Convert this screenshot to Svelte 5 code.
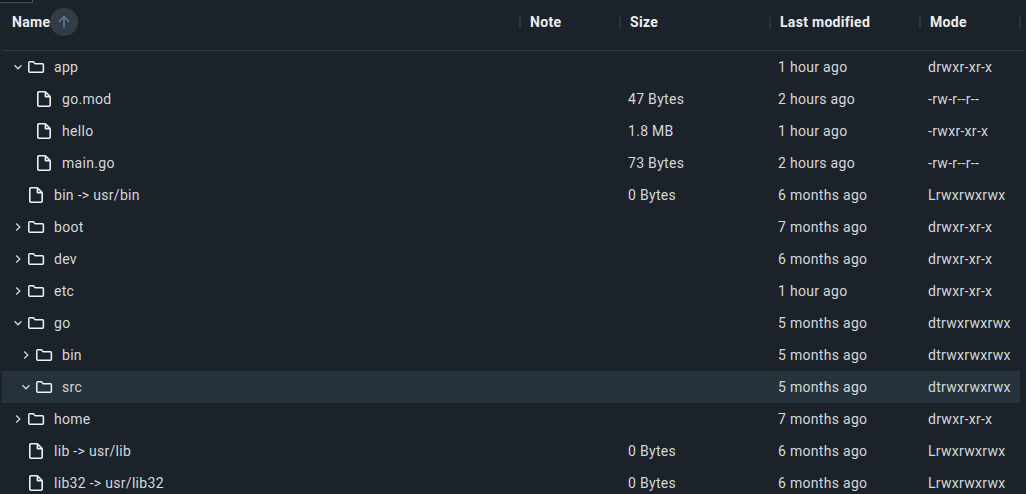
<script>
    // depth: indent level, open: null for plain files
    const rows = [
        { name: 'app', folder: true, open: true, depth: 0, mod: '1 hour ago', mode: 'drwxr-xr-x' },
        { name: 'go.mod', depth: 1, size: '47 Bytes', mod: '2 hours ago', mode: '-rw-r--r--' },
        { name: 'hello', depth: 1, size: '1.8 MB', mod: '1 hour ago', mode: '-rwxr-xr-x' },
        { name: 'main.go', depth: 1, size: '73 Bytes', mod: '2 hours ago', mode: '-rw-r--r--' },
        { name: 'bin -> usr/bin', depth: 0, size: '0 Bytes', mod: '6 months ago', mode: 'Lrwxrwxrwx' },
        { name: 'boot', folder: true, depth: 0, mod: '7 months ago', mode: 'drwxr-xr-x' },
        { name: 'dev', folder: true, depth: 0, mod: '6 months ago', mode: 'drwxr-xr-x' },
        { name: 'etc', folder: true, depth: 0, mod: '1 hour ago', mode: 'drwxr-xr-x' },
        { name: 'go', folder: true, open: true, depth: 0, mod: '5 months ago', mode: 'dtrwxrwxrwx' },
        { name: 'bin', folder: true, depth: 1, mod: '5 months ago', mode: 'dtrwxrwxrwx' },
        { name: 'src', folder: true, open: true, depth: 1, selected: true, mod: '5 months ago', mode: 'dtrwxrwxrwx' },
        { name: 'home', folder: true, depth: 0, mod: '7 months ago', mode: 'drwxr-xr-x' },
        { name: 'lib -> usr/lib', depth: 0, size: '0 Bytes', mod: '6 months ago', mode: 'Lrwxrwxrwx' },
        { name: 'lib32 -> usr/lib32', depth: 0, size: '0 Bytes', mod: '6 months ago', mode: 'Lrwxrwxrwx' }
    ];
</script>

<div class="browser">
    <div class="corner"></div>
    <div class="head">
        <div class="th name">
            <span>Name</span>
            <span class="sort">
                <svg width="14" height="14" viewBox="0 0 14 14" fill="none" stroke="#5b7f9f" stroke-width="1.5">
                    <path d="M7 12.8V1.8M1.8 7L7 1.8 12.2 7" />
                </svg>
            </span>
        </div>
        <div class="th note">Note</div>
        <div class="th size">Size</div>
        <div class="th mod">Last modified</div>
        <div class="th mode">Mode</div>
        <div class="th end"></div>
    </div>

    <div class="body">
        {#each rows as row}
            <div class="row" class:selected={row.selected}>
                <div class="cell name">
                    <span class="indent" class:deep={row.depth > 0}></span>
                    <span class="chev">
                        {#if row.folder}
                            <svg width="10" height="10" viewBox="0 0 10 10" fill="none" stroke="#d5d8da" stroke-width="1.3">
                                {#if row.open}
                                    <path d="M1.5 3.2L5 6.8l3.5-3.6" />
                                {:else}
                                    <path d="M3.2 1.5L6.8 5 3.2 8.5" />
                                {/if}
                            </svg>
                        {/if}
                    </span>
                    {#if row.folder}
                        <svg class="icon" width="18" height="16" viewBox="0 0 18 16" fill="none" stroke="#eef0f1" stroke-width="1.5" stroke-linejoin="round">
                            <path d="M1.8 3.8q0-1 1-1h3.6l1.8 2h7.2q1 0 1 1v6.4q0 1-1 1H2.8q-1 0-1-1z" />
                        </svg>
                    {:else}
                        <svg class="icon file" width="16" height="18" viewBox="0 0 16 18" fill="none" stroke="#eef0f1" stroke-width="1.6" stroke-linejoin="round">
                            <path d="M1.8 2.8q0-1 1-1h6.6l4.8 4.8v8.6q0 1-1 1H2.8q-1 0-1-1zM9.4 1.8v4.8h4.8" />
                        </svg>
                    {/if}
                    <span class="label">{row.name}</span>
                </div>
                <div class="cell note"></div>
                <div class="cell size">{row.size ?? ''}</div>
                <div class="cell mod">{row.mod}</div>
                <div class="cell mode">{row.mode}</div>
            </div>
        {/each}
    </div>
</div>

<style>
:global(body) {
    margin: 0;
    background: #1b222a;
    overflow: hidden;
}
.browser {
    position: relative;
    width: 1026px;
    height: 494px;
    overflow: hidden;
    padding-left: 2px;
    box-sizing: border-box;
    background: #1b222a;
    color: #d5d8da;
    font-family: Roboto, "Liberation Sans", sans-serif;
    font-size: 14px;
    letter-spacing: 0.3px;
}
.corner {
    position: absolute;
    left: 0;
    top: 0;
    width: 32px;
    height: 2px;
    background: #14181d;
    border-right: 1px solid #4a4f55;
    border-bottom: 1px solid #4a4f55;
}
.head {
    display: flex;
    align-items: center;
    height: 44px;
    padding-bottom: 6px;
    border-bottom: 1px solid #30373e;
    width: 1022px;
}
.th {
    box-sizing: border-box;
    display: flex;
    align-items: center;
    height: 20px;
    font-weight: 700;
    color: #eceeef;
    position: relative;
}
.th.mode { padding-left: 10px; }
.th:not(.name)::before {
    content: "";
    position: absolute;
    left: -1px;
    top: 3px;
    height: 14px;
    width: 2px;
    background: #2a3138;
}
.sort {
    width: 28px;
    height: 28px;
    border-radius: 50%;
    background: #313c47;
    display: flex;
    align-items: center;
    justify-content: center;
}
.row {
    display: flex;
    align-items: center;
    height: 32px;
    width: 1018px;
}
.row.selected {
    background: #26323b;
}
.name { width: 518px; padding-left: 10px; box-sizing: border-box; }
.note { width: 100px; padding-left: 10px; box-sizing: border-box; }
.size { width: 150px; padding-left: 10px; box-sizing: border-box; }
.mod { width: 150px; padding-left: 10px; box-sizing: border-box; }
.mode { width: 100px; padding-left: 8px; box-sizing: border-box; }
.end { width: 2px; }
.cell.size, .cell.mod { padding-left: 8px; }
.cell {
    white-space: nowrap;
}
.cell.name {
    display: flex;
    align-items: center;
    padding-left: 0;
}
.indent { width: 11px; flex: none; }
.indent.deep { width: 19px; }
.chev {
    width: 12px;
    height: 10px;
    flex: none;
    display: flex;
}
.icon {
    flex: none;
    margin-left: 2px;
}
.icon.file {
    margin-left: 3px;
    margin-right: 1px;
}
.label {
    margin-left: 9px;
}
</style>
